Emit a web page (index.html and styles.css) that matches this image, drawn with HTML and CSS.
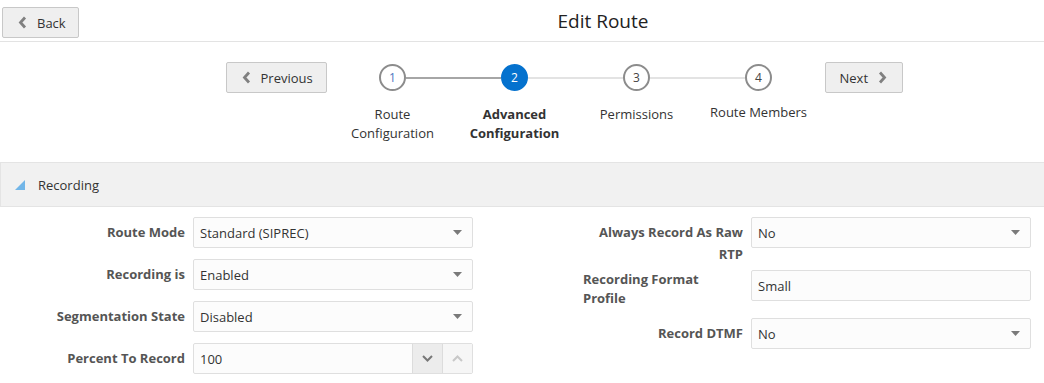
FILE: index.html
```html
<!DOCTYPE html>
<html lang="en">
<head>
  <meta charset="UTF-8" />
  <title>Edit Route</title>
  <link rel="stylesheet" href="styles.css">
</head>
<body>
  <header class="topbar">
    <button class="btn btn-back">
      <svg class="chev" width="9" height="13" viewBox="0 0 9 13"><polyline points="7,1.5 2.5,6.5 7,11.5" /></svg>
      Back
    </button>
    <h1>Edit Route</h1>
  </header>

  <div class="train-row">
    <button class="btn btn-prev">
      <svg class="chev" width="9" height="13" viewBox="0 0 9 13"><polyline points="7,1.5 2.5,6.5 7,11.5" /></svg>
      Previous
    </button>
    <ol class="train">
      <li class="step step-done">
        <div class="step-track"><span class="step-dot">1</span></div>
        <div class="step-label">Route<br>Configuration</div>
      </li>
      <li class="step step-current">
        <div class="step-track"><span class="step-dot">2</span></div>
        <div class="step-label">Advanced<br>Configuration</div>
      </li>
      <li class="step">
        <div class="step-track"><span class="step-dot">3</span></div>
        <div class="step-label">Permissions</div>
      </li>
      <li class="step">
        <div class="step-track"><span class="step-dot">4</span></div>
        <div class="step-label step-label-up">Route Members</div>
      </li>
    </ol>
    <button class="btn btn-next">
      Next
      <svg class="chev" width="9" height="13" viewBox="0 0 9 13"><polyline points="2,1.5 6.5,6.5 2,11.5" /></svg>
    </button>
  </div>

  <section class="panel">
    <div class="panel-header">
      <svg width="10" height="10" viewBox="0 0 10 10"><polygon points="0,10 10,10 10,0" fill="#72b6e8" /></svg>
      <span>Recording</span>
    </div>

    <div class="form">
      <div class="form-col">
        <div class="field">
          <label class="field-label">Route Mode</label>
          <div class="control select">Standard (SIPREC)<svg class="caret" width="9" height="5" viewBox="0 0 9 5"><polygon points="0,0 9,0 4.5,5" /></svg></div>
        </div>
        <div class="field">
          <label class="field-label">Recording is</label>
          <div class="control select">Enabled<svg class="caret" width="9" height="5" viewBox="0 0 9 5"><polygon points="0,0 9,0 4.5,5" /></svg></div>
        </div>
        <div class="field">
          <label class="field-label">Segmentation State</label>
          <div class="control select">Disabled<svg class="caret" width="9" height="5" viewBox="0 0 9 5"><polygon points="0,0 9,0 4.5,5" /></svg></div>
        </div>
        <div class="field">
          <label class="field-label">Percent To Record</label>
          <div class="control number">
            <span class="number-value">100</span>
            <span class="spin spin-down"><svg width="11" height="7" viewBox="0 0 11 7"><polyline points="1,1 5.5,5.5 10,1" /></svg></span>
            <span class="spin spin-up"><svg width="11" height="7" viewBox="0 0 11 7"><polyline points="1,6 5.5,1.5 10,6" /></svg></span>
          </div>
        </div>
      </div>

      <div class="form-col">
        <div class="field field-tall">
          <label class="field-label label-wrap">Always Record As Raw RTP</label>
          <div class="control select">No<svg class="caret" width="9" height="5" viewBox="0 0 9 5"><polygon points="0,0 9,0 4.5,5" /></svg></div>
        </div>
        <div class="field field-wrap">
          <label class="field-label label-left">Recording Format Profile</label>
          <div class="control">Small</div>
        </div>
        <div class="field">
          <label class="field-label">Record DTMF</label>
          <div class="control select">No<svg class="caret" width="9" height="5" viewBox="0 0 9 5"><polygon points="0,0 9,0 4.5,5" /></svg></div>
        </div>
      </div>
    </div>
  </section>
</body>
</html>
```

FILE: styles.css
```css
body {
  margin: 0;
  font-family: "Open Sans", "Noto Sans", sans-serif;
  font-size: 13px;
  color: #333;
  background: #fff;
}

.btn {
  display: inline-flex;
  align-items: center;
  gap: 10px;
  height: 31px;
  box-sizing: border-box;
  background: #efefef;
  border: 1px solid #c8c8c8;
  border-radius: 2px;
  font-family: inherit;
  font-size: 13px;
  color: #333;
  padding: 0 12px 0 15px;
  cursor: pointer;
}
.chev polyline {
  fill: none;
  stroke: #808080;
  stroke-width: 2.8;
}

/* header */
.topbar {
  display: flex;
  align-items: flex-start;
  padding: 7px 0 3px 2px;
  border-bottom: 1px solid #e3e3e3;
}
.btn-back {
  width: 77px;
}
.topbar h1 {
  flex: 1;
  margin: 0;
  padding-left: 83px;
  text-align: center;
  font-size: 19px;
  font-weight: normal;
  line-height: 29px;
  color: #222;
}

/* train */
.train-row {
  display: flex;
  justify-content: center;
  align-items: flex-start;
  margin-top: 20px;
  padding-left: 84px;
}
.btn-prev {
  width: 101px;
}
.btn-next {
  width: 78px;
  padding: 0 12px 0 14px;
}
.train {
  display: flex;
  list-style: none;
  margin: 0 5px;
  padding: 0;
}
.step {
  width: 122px;
  display: flex;
  flex-direction: column;
  align-items: center;
}
.step-track {
  display: flex;
  align-items: center;
  width: 100%;
  margin-top: 2px;
}
.step-track::before,
.step-track::after {
  content: "";
  flex: 1;
  height: 2px;
  background: #e3e3e3;
}
.step:first-child .step-track::before,
.step:last-child .step-track::after {
  background: transparent;
}
.step-done .step-track::after,
.step-current .step-track::before {
  background: #a6a6a6;
}
.step-dot {
  width: 23px;
  height: 23px;
  border: 2px solid #8c8c8c;
  border-radius: 50%;
  background: #fff;
  display: flex;
  align-items: center;
  justify-content: center;
  font-size: 12px;
  color: #444;
}
.step-done .step-dot {
  color: #4f78c0;
}
.step-current .step-dot {
  background: #0572ce;
  border-color: #0572ce;
  color: #fff;
}
.step-label {
  margin-top: 14px;
  text-align: center;
  line-height: 19px;
  color: #333;
}
.step-current .step-label {
  font-weight: bold;
}
.step-label-up {
  margin-top: 12px;
}

/* recording panel */
.panel {
  margin-top: 19px;
}
.panel-header {
  display: flex;
  align-items: center;
  gap: 13px;
  height: 43px;
  padding-left: 14px;
  background: #f1f1f1;
  border: 1px solid #e4e4e4;
  border-right: none;
}

.form {
  display: flex;
  gap: 110px;
  padding: 10px 0 0 25px;
}
.form-col {
  width: 448px;
}
.field {
  display: flex;
  align-items: flex-start;
  gap: 8px;
  margin-bottom: 11px;
}
.field-label {
  width: 160px;
  flex-shrink: 0;
  text-align: right;
  font-weight: bold;
  color: #555;
  line-height: 31px;
}
.label-wrap {
  line-height: 22px;
  padding-top: 4px;
}
.label-left {
  text-align: left;
  line-height: 19px;
}
.field-tall {
  margin-bottom: 5px;
}
.field-wrap {
  margin-bottom: 10px;
}
.control {
  width: 280px;
  height: 31px;
  box-sizing: border-box;
  display: flex;
  align-items: center;
  padding-left: 6px;
  background: #fcfcfc;
  border: 1px solid #dfdfdf;
  border-radius: 2px;
  color: #333;
}
.caret {
  margin-left: auto;
  margin-right: 10px;
  fill: #7a7a7a;
}
.number {
  padding-right: 0;
}
.number-value {
  flex: 1;
}
.spin {
  width: 29px;
  height: 100%;
  display: flex;
  align-items: center;
  justify-content: center;
  border-left: 1px solid #dcdcdc;
}
.spin polyline {
  fill: none;
  stroke-width: 2;
}
.spin-down {
  background: #ececec;
}
.spin-down polyline {
  stroke: #777;
}
.spin-up {
  background: #f6f6f6;
}
.spin-up polyline {
  stroke: #c8c8c8;
}
```
